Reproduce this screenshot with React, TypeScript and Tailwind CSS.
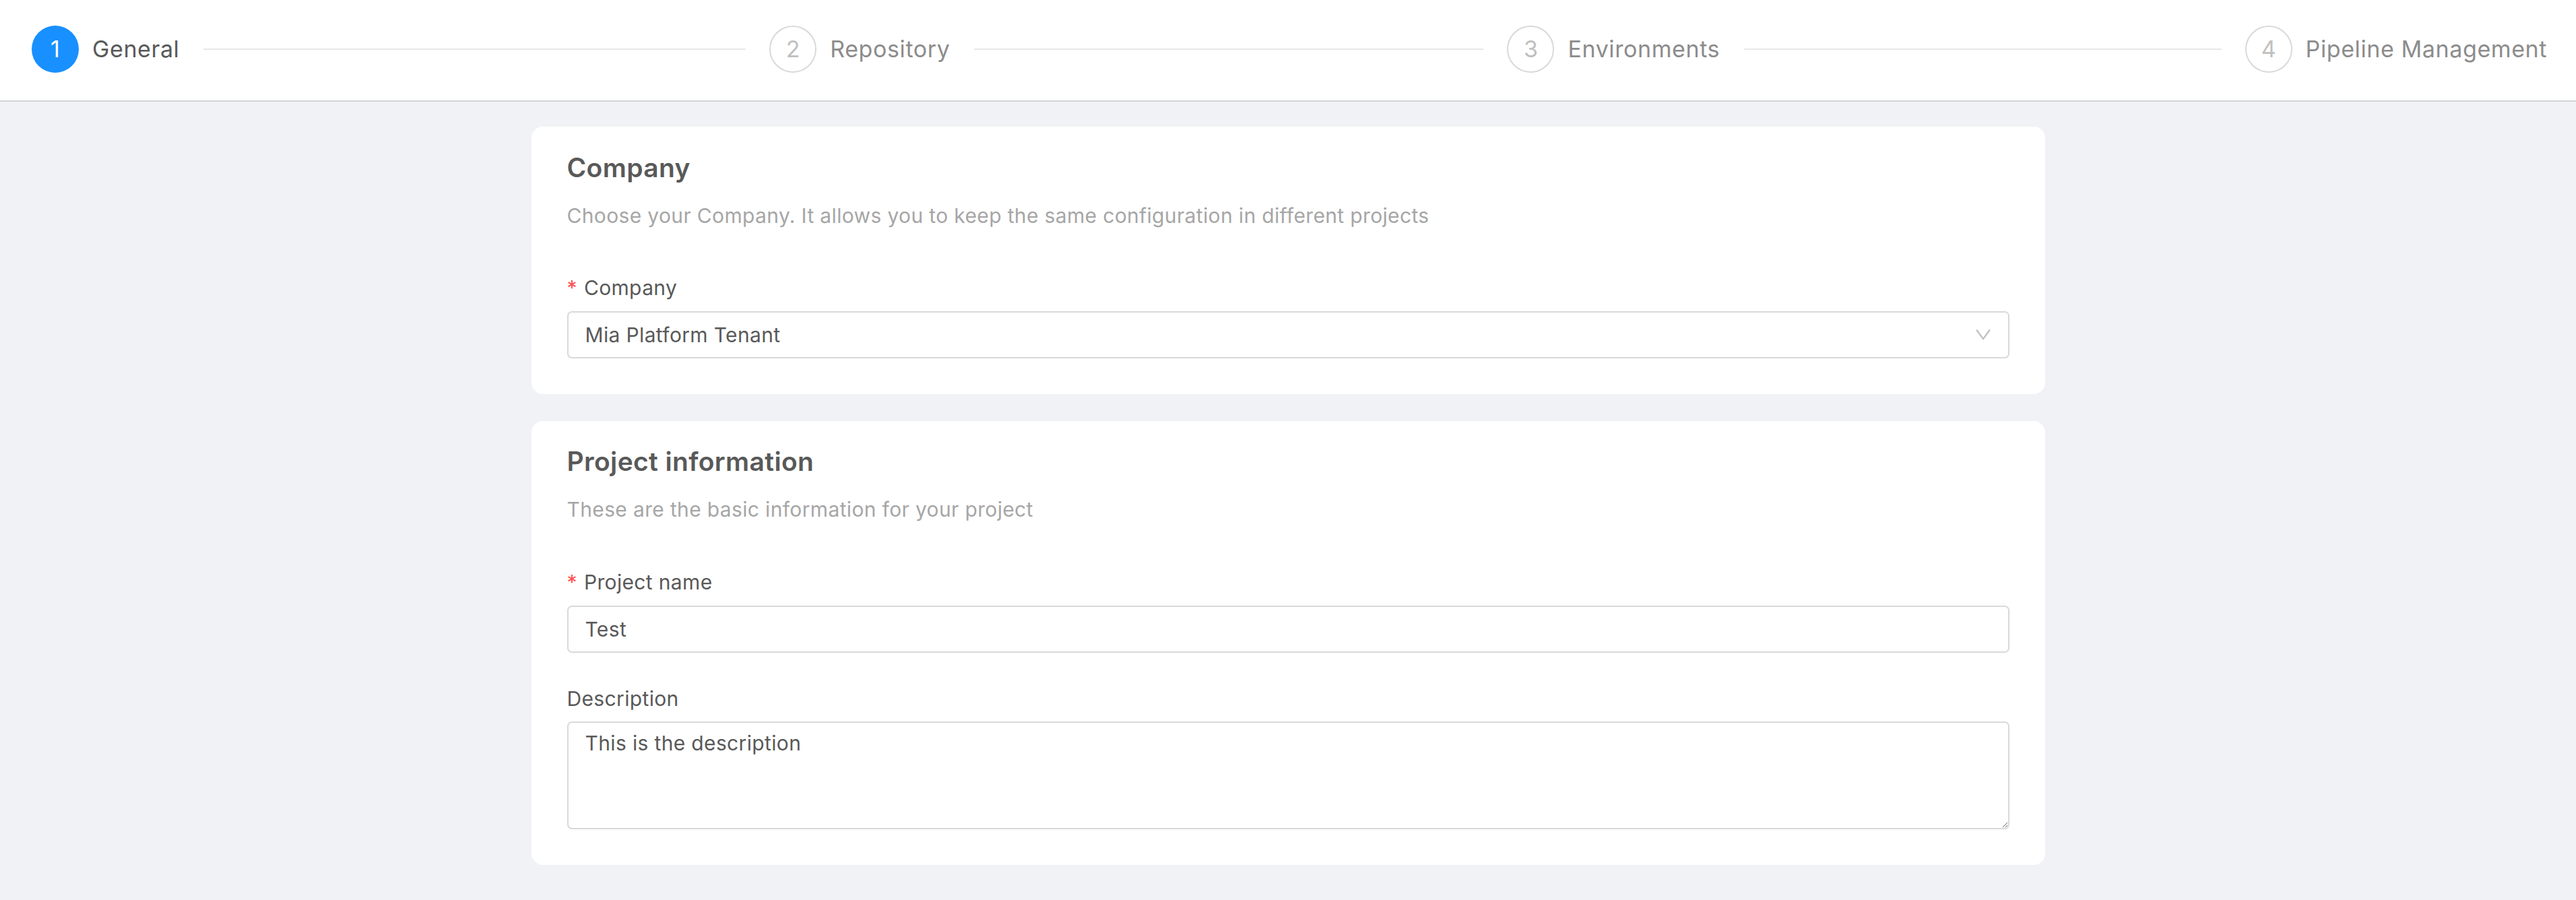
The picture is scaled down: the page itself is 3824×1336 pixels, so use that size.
import React from "react";

const steps = [
  { n: 1, title: "General", active: true },
  { n: 2, title: "Repository", active: false },
  { n: 3, title: "Environments", active: false },
  { n: 4, title: "Pipeline Management", active: false },
];

function StepCircle({ n, active }: { n: number; active: boolean }) {
  if (active) {
    return (
      <div className="flex h-[70px] w-[70px] shrink-0 items-center justify-center rounded-full bg-[#1890ff] text-[34px] leading-none text-white">
        {n}
      </div>
    );
  }
  return (
    <div className="flex h-[70px] w-[70px] shrink-0 items-center justify-center rounded-full border-2 border-[#d9d9d9] text-[34px] leading-none text-[#bfbfbf]">
      {n}
    </div>
  );
}

function Label({ text, required }: { text: string; required?: boolean }) {
  return (
    <div className="flex items-center text-[30px] leading-[44px] tracking-[0.35px] text-[#595959]">
      {required && <span className="mr-[10px] text-[#ff4d4f]">*</span>}
      <span>{text}</span>
    </div>
  );
}

export default function App() {
  return (
    <div className="min-h-screen bg-[#f0f2f5] font-['Inter',sans-serif]">
      <div className="flex h-[151px] items-start border-b-2 border-[#d4d4d4] bg-white pl-[47px] pr-[43px] pt-[38px]">
        {steps.map((s, i) => {
          const last = i === steps.length - 1;
          return (
            <div
              key={s.n}
              className={last ? "flex flex-none items-center" : "flex min-w-0 flex-1 items-center pr-[35px]"}
            >
              <StepCircle n={s.n} active={s.active} />
              <span
                className={
                  s.active
                    ? "ml-[20px] whitespace-nowrap text-[34px] leading-[48px] tracking-[0.6px] text-[#595959]"
                    : "ml-[20px] whitespace-nowrap text-[34px] leading-[48px] tracking-[0.6px] text-[#8c8c8c]"
                }
              >
                {s.title}
              </span>
              {!last && <div className="ml-[36px] h-[2px] flex-1 bg-[#e8e8e8]" />}
            </div>
          );
        })}
      </div>

      <div className="mx-auto mt-[37px] flex w-[2247px] flex-col gap-[40px]">
        <div className="rounded-[17px] bg-white px-[53px] pb-[53px] pt-[38px]">
          <h4 className="text-[39px] font-semibold leading-[46px] tracking-[0.35px] text-[#595959]">Company</h4>
          <p className="mt-[26px] text-[30px] leading-[44px] tracking-[0.35px] text-[#a6a6a6]">
            Choose your Company. It allows you to keep the same configuration in different projects
          </p>
          <div className="mt-[63px]">
            <Label text="Company" required />
          </div>
          <div className="mt-[13px] flex h-[70px] items-center justify-between rounded-[7px] border-2 border-[#d9d9d9] pl-[25px] pr-[24px]">
            <span className="text-[30px] leading-[44px] tracking-[0.35px] text-[#595959]">Mia Platform Tenant</span>
            <svg viewBox="64 64 896 896" width="26" height="26" fill="#bfbfbf">
              <path d="M884 256h-75c-5.1 0-9.9 2.5-12.9 6.6L512 654.2 227.9 262.6c-3-4.1-7.8-6.6-12.9-6.6h-75c-6.5 0-10.3 7.4-6.5 12.7l352.6 486.1c12.8 17.6 39 17.6 51.7 0l352.6-486.1c3.9-5.3.1-12.7-6.4-12.7z" />
            </svg>
          </div>
        </div>

        <div className="rounded-[17px] bg-white px-[53px] pb-[53px] pt-[37px]">
          <h4 className="text-[39px] font-semibold leading-[46px] tracking-[0.35px] text-[#595959]">Project information</h4>
          <p className="mt-[26px] text-[30px] leading-[44px] tracking-[0.35px] text-[#a6a6a6]">
            These are the basic information for your project
          </p>
          <div className="mt-[64px]">
            <Label text="Project name" required />
          </div>
          <input
            readOnly
            value="Test"
            className="mt-[13px] block h-[70px] w-full rounded-[7px] border-2 border-[#d9d9d9] bg-white pl-[25px] pr-[23px] text-[30px] leading-[44px] tracking-[0.35px] text-[#595959] outline-none"
          />
          <div className="mt-[46px]">
            <Label text="Description" />
          </div>
          <textarea
            readOnly
            defaultValue="This is the description"
            className="mt-[12px] block h-[160px] w-full rounded-[7px] border-2 border-[#d9d9d9] bg-white pl-[25px] pr-[23px] pt-[8px] text-[30px] leading-[44px] tracking-[0.35px] text-[#595959] outline-none"
          />
        </div>
      </div>
    </div>
  );
}
